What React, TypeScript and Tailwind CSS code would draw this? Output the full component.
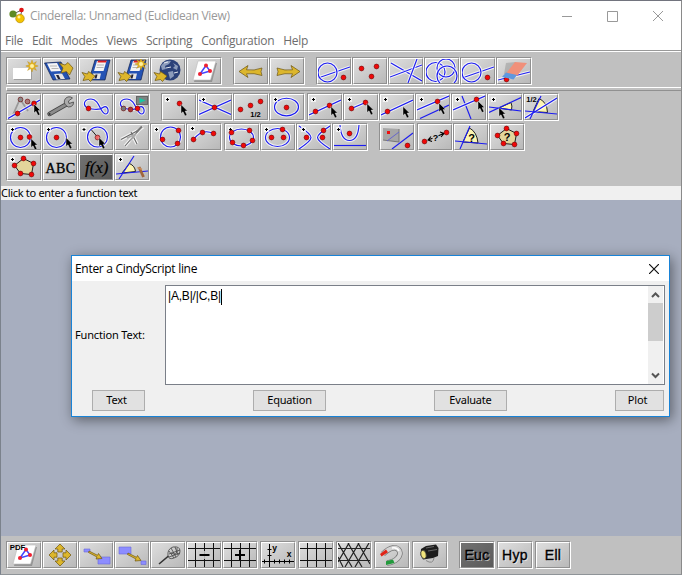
import React from "react";

type Pt = [number, number];

const Line = ({ d, glow = true }: { d: string; glow?: boolean }) => (
  <>
    {glow && <path d={d} fill="none" stroke="#fff" strokeOpacity={0.75} strokeWidth={3.2} />}
    <path d={d} fill="none" stroke="#1c1cf0" strokeWidth={1.15} />
  </>
);

const Dot = ({ at, fill = "#f00808", r = 2.4 }: { at: Pt; fill?: string; r?: number }) => (
  <circle cx={at[0]} cy={at[1]} r={r} fill={fill} stroke="#6b0000" strokeWidth={0.6} />
);

const Dots = ({ pts }: { pts: Pt[] }) => (
  <>
    {pts.map((p, i) => (
      <Dot key={i} at={p} />
    ))}
  </>
);

const Plus = ({ x = 4.5, y = 4.5 }: { x?: number; y?: number }) => (
  <g>
    <rect x={x - 2.5} y={y - 2.5} width={5} height={5} fill="#fff" fillOpacity={0.7} />
    <path d={`M${x - 1.5} ${y}h3M${x} ${y - 1.5}v3`} stroke="#000" strokeWidth={1} />
  </g>
);

const Cursor = ({ x, y }: { x: number; y: number }) => (
  <path
    transform={`translate(${x} ${y})`}
    d="M0 0V9L2 7.3L4 11.5L6 10.6L4.1 6.6H6.6Z"
    fill="#000"
    stroke="#fff"
    strokeWidth={0.4}
  />
);

const Txt = ({ x, y, s, children }: { x: number; y: number; s: number; children: string }) => (
  <text x={x} y={y} fontSize={s} fontWeight={700} textAnchor="middle" fontFamily="'Liberation Sans', sans-serif">
    {children}
  </text>
);

const Wedge = ({ d }: { d: string }) => <path d={d} fill="#fdf5b0" stroke="#222" strokeWidth={1} />;

const Gold = ({ d }: { d: string }) => <path d={d} fill="#dcb62c" stroke="#6d5410" strokeWidth={0.7} strokeLinejoin="round" />;

const PENTA: Pt[] = [
  [15.5, 3.5],
  [25.5, 8.5],
  [23.5, 19.5],
  [12.5, 18.5],
  [6.5, 10.5],
];
const Pentagon = () => (
  <>
    <path d="M15.5 3.5L25.5 8.5L23.5 19.5L12.5 18.5L6.5 10.5Z" fill="#e3d59b" stroke="#222" />
    <Dots pts={PENTA} />
  </>
);

const Floppy = () => (
  <g>
    <path d="M15 1H30L25 21H9Z" fill="#2453b4" stroke="#10204f" strokeWidth={0.7} />
    <path d="M17 2H26.5L23.5 12H14Z" fill="#f4f4f4" />
    <path d="M18 1.5H26.8L26 3.5H17.5Z" fill="#d22" />
    <path d="M17 6H24M16.5 8.5H23.5" stroke="#999" strokeWidth={0.7} />
    <path d="M13 14.5H21L19.7 20H11.5Z" fill="#e4e4e4" />
    <path d="M15.5 15.5H17.5L16.5 19.5H14.5Z" fill="#223" />
  </g>
);

const Star = ({ x, y }: { x: number; y: number }) => (
  <g transform={`translate(${x} ${y})`}>
    <path
      d="M0-6L1.3-2.5L4.4-4.4L2.7-1.2L6.2 0L2.7 1.2L4.4 4.4L1.3 2.6L0 6L-1.3 2.6L-4.4 4.4L-2.7 1.2L-6.2 0L-2.7-1.2L-4.4-4.4L-1.3-2.5Z"
      fill="#e4b524"
      stroke="#b98a14"
      strokeWidth={0.4}
    />
    <circle r={2} fill="#fff0a0" />
  </g>
);

const LOAD_ARROW = "M2 13.5L7.5 15L8.5 12.5L15 17L10.5 22.5L8.5 20.5L3 21.5L4.8 17.5Z";
const LOOP = "M8 13.5C2 10 4 4 11 4C20 4 20 19 26 19C30 18 28 9 23 12.5C19 16 14 14 8 13.5";

const Sheet = () => (
  <g>
    <path d="M11 4H29L24 23H6Z" fill="#777" opacity={0.6} />
    <path d="M10 2H28L22.5 21H5Z" fill="#fff" stroke="#bbb" strokeWidth={0.6} />
    <path d="M18 6.5L12 15L22 12Z" fill="none" stroke="#44f" strokeWidth={1.5} />
    <circle cx={18} cy={6.5} r={2} fill="#f02030" />
    <circle cx={12} cy={15} r={2} fill="#f02030" />
    <circle cx={22} cy={12} r={2} fill="#f02030" />
  </g>
);

const gridLines = "M0 5.5H32M0 17.5H32M7.5 0V24M16.5 0V24M25.5 0V24";

const icons: Record<string, React.ReactNode> = {
  fresh: (
    <>
      <path d="M6 10H24V21H6Z" fill="#777" opacity={0.5} />
      <path d="M5 9H23V20H5Z" fill="#fff" />
      <Star x={24} y={7} />
    </>
  ),
  open: (
    <>
      <path d="M0.5 4L17 3L26 20L9 21Z" fill="#2453b4" stroke="#10204f" strokeWidth={0.7} />
      <path d="M3 4.5L13 4L17 12L7 12.5Z" fill="#f4f4f4" />
      <path d="M6 7H13M7.5 9.5H14.5" stroke="#999" strokeWidth={0.7} />
      <path d="M10 15L18 14.5L21 20L12.5 20.5Z" fill="#e4e4e4" />
      <path d="M12 16H14.5L16.5 20H14Z" fill="#223" />
      <Gold d="M15 4L21 6L24 3.5L29 9L25.5 16L22.5 12.5L17 14L19 9Z" />
    </>
  ),
  save: (
    <>
      <Floppy />
      <Gold d={LOAD_ARROW} />
    </>
  ),
  saveAs: (
    <>
      <Floppy />
      <Gold d={LOAD_ARROW} />
      <Star x={25} y={5} />
    </>
  ),
  web: (
    <>
      <circle cx={18} cy={11} r={10.5} fill="#2b4179" />
      <path d="M9 7Q13 1 19 2L17 5L13 7L14 10L10 11ZM21 4L26 7L25 11L21 9L23 7ZM16 13L21 12L22 17L18 20L17 16Z" fill="#8b9bbb" />
      <path d="M12 4L16 3M22 14L26 13M14 9L19 8" stroke="#e4e8f0" />
      <Gold d={LOAD_ARROW} />
    </>
  ),
  sheet: <Sheet />,
  undo: <Gold d="M4 12.5L13 6.5L11.5 10.8Q19 12 27 9Q25 12.5 27 16.5Q19 13.8 11.5 14.8L13 18.5Z" />,
  redo: <Gold d="M29 12.5L20 6.5L21.5 10.8Q14 12 6 9Q8 12.5 6 16.5Q14 13.8 21.5 14.8L20 18.5Z" />,
  lineCircle: (
    <>
      <Line d="M0 19L32 8" />
      <Line d="M19 13.5A9.5 9.5 0 1 1 0 13.5A9.5 9.5 0 1 1 19 13.5" />
      <Dot at={[25.5, 18.5]} />
    </>
  ),
  dots3: <Dots pts={[[7.5, 9.5], [22.5, 7.5], [17.5, 17.5]]} />,
  lines3: (
    <>
      <Line d="M1 4L32 22" />
      <Line d="M0 18L32 6" />
      <Line d="M18 24L27 0" />
    </>
  ),
  circles3: (
    <>
      <Line d="M19 13A9.5 9.5 0 1 1 0 13A9.5 9.5 0 1 1 19 13" />
      <Line d="M29 9A9 9 0 1 1 11 9A9 9 0 1 1 29 9" />
      <Line d="M31 17A9.5 9.5 0 1 1 11 17A9.5 9.5 0 1 1 31 17" />
    </>
  ),
  eraser: (
    <>
      <Line d="M0 21L32 13" />
      <Dot at={[8.5, 20.5]} />
      <path d="M8 4L18 3L9 15H6Z" fill="#777" opacity={0.35} />
      <path d="M17 3L29 4L19 17L8 14.5Z" fill="#f0907a" />
      <path d="M8 13.5L19 16L15.5 20.5L4 18Z" fill="#5f98df" />
    </>
  ),
  move: (
    <>
      <path d="M4 22L12 4L20 16M18 7L26 11" fill="none" stroke="#999" strokeWidth={1.8} />
      <Dot at={[12.5, 4.5]} fill="#888" />
      <Dot at={[19.5, 6.5]} fill="#a77" />
      <Line d="M0 23.5L32 5" />
      <Dots pts={[[9.5, 18.5], [26, 8.5]]} />
      <Cursor x={26} y={9} />
    </>
  ),
  wrench: (
    <>
      <path d="M5.5 19L23 9" stroke="#444" strokeWidth={4.4} strokeLinecap="round" />
      <path d="M5.5 19L23 9" stroke="#8c8c8c" strokeWidth={2.8} strokeLinecap="round" />
      <path d="M28.5 3L24.5 6L25 8.5L29.5 7A4.3 4.3 0 0 1 22 10.5A4.4 4.4 0 0 1 28.5 3Z" fill="#aaa" stroke="#444" strokeWidth={0.8} />
      <circle cx={5.5} cy={19} r={1.1} fill="#333" />
    </>
  ),
  locus: (
    <>
      <Line d={LOOP} />
      <Dot at={[8.5, 13.5]} />
    </>
  ),
  anim: (
    <>
      <Line d={LOOP} />
      <Dot at={[7.5, 13.5]} fill="#777" />
      <Dot at={[14.5, 14.5]} fill="#a33" />
      <Dot at={[21.5, 13.5]} />
      <rect x={20.5} y={1.5} width={11} height={8} fill="#7c8583" stroke="#666" />
      <path d="M23.5 3L29.5 5.5L23.5 8Z" fill="#14c9a4" />
    </>
  ),
  point: (
    <>
      <Plus />
      <Dot at={[16.5, 8.5]} />
      <Cursor x={18} y={9.5} />
    </>
  ),
  meet: (
    <>
      <Line d="M0 5L32 19.5" />
      <Line d="M0 19.5L32 5" />
      <Plus />
      <Dot at={[15.5, 12.5]} />
    </>
  ),
  mid: (
    <>
      <Dots pts={[[5.5, 14.5], [15.5, 10.5], [25.5, 6.5]]} />
      <Txt x={20.5} y={21.5} s={7.5}>1/2</Txt>
    </>
  ),
  center: (
    <>
      <Line d="M27.5 12A12 8.8 0 1 1 3.5 12A12 8.8 0 1 1 27.5 12" />
      <Plus />
      <Dot at={[15.5, 12.5]} />
    </>
  ),
  line: (
    <>
      <Line d="M0 20L32 5" />
      <Plus />
      <Dots pts={[[6.5, 16.5], [20.5, 10.5]]} />
      <Cursor x={22} y={11.5} />
    </>
  ),
  segment: (
    <>
      <Line d="M6.5 13.5L20.5 7.5" />
      <Plus />
      <Dots pts={[[6.5, 13.5], [20.5, 7.5]]} />
      <Cursor x={22} y={8.5} />
    </>
  ),
  ray: (
    <>
      <Line d="M0 20L32 5" />
      <Plus />
      <Dot at={[6.5, 16.5]} />
      <Cursor x={22} y={11.5} />
    </>
  ),
  parallel: (
    <>
      <Line d="M0 15L32 1" />
      <Line d="M3 23.5L32 10" glow={false} />
      <Plus />
      <Dot at={[20.5, 6.5]} />
      <Cursor x={22} y={8} />
    </>
  ),
  perp: (
    <>
      <Line d="M9 1L18 24" glow={false} />
      <Line d="M0 15L32 1" />
      <Plus />
      <Dot at={[23.5, 4.5]} />
      <Cursor x={25} y={6} />
    </>
  ),
  angle: (
    <>
      <Wedge d="M10 13L22 7.5Q23.5 11 22.5 15Z" />
      <Line d="M0 12L32 16" glow={false} />
      <Line d="M0 17.5L32 2.5" glow={false} />
      <Plus />
      <Cursor x={10} y={12.5} />
    </>
  ),
  bisect: (
    <>
      <Wedge d="M8 16.5L14 3.5Q22 7 22.5 17.5Z" />
      <Line d="M0 23L32 3" />
      <Line d="M0 16L32 19M5 24L16 1" glow={false} />
      <Txt x={6.5} y={7} s={7.5}>1/2</Txt>
    </>
  ),
  circle2: (
    <>
      <Line d="M22.5 12.5A10 10 0 1 1 2.5 12.5A10 10 0 1 1 22.5 12.5" />
      <Plus />
      <Dots pts={[[12.5, 12.5], [21.5, 12]]} />
      <Cursor x={23} y={13.5} />
    </>
  ),
  circle1: (
    <>
      <Line d="M22.5 12.5A10 10 0 1 1 2.5 12.5A10 10 0 1 1 22.5 12.5" />
      <Plus />
      <Dot at={[12.5, 12.5]} />
      <Cursor x={22} y={12.5} />
    </>
  ),
  circleR: (
    <>
      <Line d="M27.5 12A10 10 0 1 1 7.5 12A10 10 0 1 1 27.5 12" />
      <path d="M11.5 5L17.5 12" stroke="#222" />
      <Plus x={4} />
      <Dot at={[17.5, 12.5]} fill="#e66" />
      <Cursor x={19} y={12.5} />
    </>
  ),
  compass: (
    <>
      <path d="M5 14.5L23 5M9 21L23 5L27 2M15 7L21 19" fill="none" stroke="#f4f4f4" strokeWidth={3.4} />
      <path d="M5 14.5L23 5M9 21L23 5M15 7L21 19" fill="none" stroke="#666" strokeWidth={1.1} />
      <path d="M20 7.5L26 1.5" stroke="#777" strokeWidth={2.2} />
      <path d="M11 13L20 9M14 16L20 9" stroke="#aaa" strokeWidth={1.4} />
    </>
  ),
  circle3: (
    <>
      <Line d="M28.5 12A10 10 0 1 1 8.5 12A10 10 0 1 1 28.5 12" />
      <Plus />
      <Dots pts={[[10.5, 14.5], [26.5, 5.5], [25.5, 18.5]]} />
    </>
  ),
  arc: (
    <>
      <Line d="M5.5 14.5Q14 3 25.5 8.5" />
      <Plus y={3.5} />
      <Dots pts={[[5.5, 14.5], [14.5, 7.5], [25.5, 8.5]]} />
    </>
  ),
  conic5: (
    <>
      <Line d="M27.5 12.5A12 8.5 0 1 1 3.5 12.5A12 8.5 0 1 1 27.5 12.5" />
      <Plus />
      <Dots pts={[[5.5, 7.5], [23.5, 5.5], [26.5, 15.5], [17.5, 20.5], [6.5, 17.5]]} />
    </>
  ),
  ellipse: (
    <>
      <Line d="M27.5 12.5A12 9 0 1 1 3.5 12.5A12 9 0 1 1 27.5 12.5" />
      <Plus />
      <Dots pts={[[9.5, 12.5], [21.5, 12.5], [20.5, 4.5]]} />
    </>
  ),
  hyperbola: (
    <>
      <Line d="M1 1Q13 9 13 12.5Q13 16 1 24" />
      <Line d="M32 1Q19.5 9 19.5 12.5Q19.5 16 32 24" />
      <Plus x={5.5} />
      <Dots pts={[[8.5, 12.5], [24.5, 12.5], [25.5, 5.5]]} />
    </>
  ),
  parabola: (
    <>
      <Line d="M6 0Q7 15.5 15.5 15.5Q24 15.5 25 0" />
      <Line d="M0 20.5H32" glow={false} />
      <Plus />
      <Dot at={[15.5, 8.5]} />
    </>
  ),
  mirror: (
    <>
      <path d="M2 3L18 4V17L2 15Z" fill="#a6a6a6" />
      <path d="M2 15L18 17V4" fill="none" stroke="#777" />
      <path d="M6 16L18 7" stroke="#66c" />
      <Line d="M11 24L32 8" glow={false} />
      <rect x={6} y={6} width={3} height={3} fill="#e11" />
      <Dot at={[26.5, 20.5]} />
    </>
  ),
  distance: (
    <>
      <path d="M9 15L13.5 13.3M19.5 10.7L25 8.3M12 11.5L9 15L13 16.5M21 7L25 8.5L22 12" fill="none" stroke="#000" strokeWidth={1.1} />
      <Txt x={16.5} y={15.5} s={9}>?</Txt>
      <Dots pts={[[5.5, 16.5], [27.5, 7.5]]} />
    </>
  ),
  angleQ: (
    <>
      <Wedge d="M8 17L14.5 3Q22 7 23 18Z" />
      <Line d="M0 16L32 19M5 24L15 1" glow={false} />
      <Txt x={16.5} y={16.5} s={11}>?</Txt>
    </>
  ),
  areaQ: (
    <>
      <Pentagon />
      <Txt x={16} y={16} s={11}>?</Txt>
    </>
  ),
  polygon: (
    <>
      <Pentagon />
      <Plus />
    </>
  ),
  abc: (
    <text x={1.5} y={17.5} fontSize={14} stroke="#000" strokeWidth={0.35} textLength={29.5} fontFamily="'Liberation Serif', serif">
      ABC
    </text>
  ),
  fx: (
    <text x={5} y={17.5} fontSize={17} fontStyle="italic" textLength={23.5} stroke="#000" strokeWidth={0.2} fontFamily="'Liberation Serif', serif">
      f(x)
    </text>
  ),
  angleMark: (
    <>
      <Wedge d="M6 18L13.5 8.5Q19 11 19.5 16.5Z" />
      <Line d="M0 19L32 16M3 24L18 1" glow={false} />
      <path d="M23 12L27.5 22" stroke="#a0653c" strokeWidth={2.8} />
      <path d="M21.5 12.5L26 14.5" stroke="#c98e5c" strokeWidth={1.5} />
      <Plus />
    </>
  ),
  pdf: (
    <>
      <Sheet />
      <Txt x={9.5} y={7.3} s={7.8}>PDF</Txt>
    </>
  ),
  pan: (
    <Gold d="M16 1L21 6H18.2V9H13.8V6H11ZM16 23L11 18H13.8V15H18.2V18H21ZM5 12L10 7V9.8H13V14.2H10V17ZM27 12L22 7V9.8H19V14.2H22V17Z" />
  ),
  zoomIn: (
    <>
      <path d="M4 6H10V9H4ZM18 14H30V21H18Z" fill="#8d8dff" stroke="#6a6ad8" strokeWidth={0.6} />
      <Gold d="M9 8L17.5 12.3L18.5 10.5L22 15.5L16 16L17 14L8.5 9.5Z" />
    </>
  ),
  zoomOut: (
    <>
      <path d="M3 4H15V11H3ZM25 18H30V21.5H25Z" fill="#8d8dff" stroke="#6a6ad8" strokeWidth={0.6} />
      <Gold d="M12 10L20.5 14.3L21.5 12.5L25 17.5L19 18L20 16L11.5 11.5Z" />
    </>
  ),
  net: (
    <>
      <path d="M7 21L16.5 13" stroke="#333" strokeWidth={1.6} />
      <path
        d="M16 13Q15 6 21 4Q28 3 28 8Q28 13 22 15Q17 17 16 13ZM17 11L28 7M17 14L28 10M19 5L24 14M23 4L26 12M17 8L22 15M19 10Q26 14 25 5"
        fill="none"
        stroke="#444"
        strokeWidth={0.8}
      />
    </>
  ),
  gridMinus: (
    <>
      <path d={gridLines} stroke="#111" strokeWidth={1} />
      <rect x={10} y={8} width={14} height={8} fill="#ccc" fillOpacity={0.85} />
      <path d="M11.5 12H21.5" stroke="#000" strokeWidth={2} />
    </>
  ),
  gridPlus: (
    <>
      <path d={gridLines} stroke="#111" strokeWidth={1} />
      <rect x={10} y={7} width={14} height={10} fill="#ccc" fillOpacity={0.85} />
      <path d="M11 12H21M16 7V17" stroke="#000" strokeWidth={2} />
    </>
  ),
  axes: (
    <>
      <path
        d="M0 18.5H32M7.5 1V24M5.5 6.5H9.5M5.5 12.5H9.5M12.5 16.5V20.5M17.5 16.5V20.5M22.5 16.5V20.5M27.5 16.5V20.5M2.5 16.5V20.5"
        stroke="#000"
      />
      <Txt x={12.7} y={7.7} s={8.5}>y</Txt>
      <Txt x={27} y={14} s={8.5}>x</Txt>
    </>
  ),
  grid: <path d={gridLines} stroke="#111" />,
  tri: (
    <path
      d="M0 5.5H32M0 17.5H32M0 0L14 24M10 0L24 24M20 0L32 21M31 0L17 24M21 0L7 24M11 0L0 19M0 14L5 24"
      fill="none"
      stroke="#222"
      strokeWidth={1.2}
    />
  ),
  magnet: (
    <>
      <path d="M7 11C14 4 21 3 23.5 8C25.5 13 20 19 11 20" fill="none" stroke="#777" strokeWidth={5.4} />
      <path d="M7 11C14 4 21 3 23.5 8C25.5 13 20 19 11 20" fill="none" stroke="#d4d4d4" strokeWidth={4} />
      <path d="M16 5Q21 4 23 8" fill="none" stroke="#fff" strokeWidth={1.5} />
      <path d="M4 11L10 6.5L12 9.2L5.5 13.5Z" fill="#e02418" />
      <path d="M10 18.2L17 16.4L18.5 20L10 22Z" fill="#229a3c" />
    </>
  ),
  lamp: (
    <>
      <path d="M7 6L12 3L22 1.5L24.5 5L24 13L19 15L9 16.5L6.5 12Z" fill="#1d1d1d" />
      <path d="M12 5L20 3.5M14 8L23 6.5" stroke="#666" />
      <ellipse cx={9.5} cy={11.5} rx={2.6} ry={4.2} fill="#f2e57c" stroke="#333" strokeWidth={0.7} transform="rotate(-15 9.5 11.5)" />
      <path d="M12 17.5Q19 22 20 15" fill="none" stroke="#888" />
    </>
  ),
  euc: <Geo>Euc</Geo>,
  hyp: <Geo>Hyp</Geo>,
  ell: <Geo>Ell</Geo>,
};

function Geo({ children }: { children: string }) {
  return (
    <g fontFamily="'Liberation Sans', sans-serif" fontSize={14} textAnchor="middle" strokeWidth={0.35} letterSpacing={0.3}>
      <text x={17} y={18} fill="#fff" opacity={0.6}>{children}</text>
      <text x={16} y={17} stroke="#000">{children}</text>
    </g>
  );
}

function Tool({ name }: { name: string }) {
  const active = name === "fx" || name === "euc";
  return (
    <div className="h-[28px] w-[36px] shrink-0 border border-t-[#909090] border-l-[#909090] border-r-white border-b-white">
      <div
        className={
          "h-full w-full border border-t-white border-l-white border-r-[#909090] border-b-[#909090] " +
          (active ? "bg-linear-to-br from-[#727272] to-[#5a5a5a]" : "bg-linear-to-br from-[#dedede] to-[#b9b9b9]")
        }
      >
        <svg className="block" width={32} height={24} viewBox="0 0 32 24">
          {icons[name]}
        </svg>
      </div>
    </div>
  );
}

function Group({ names, className = "" }: { names: string; className?: string }) {
  return (
    <div className={"flex " + className}>
      {names.split(" ").map((n, i) => (
        <Tool key={i} name={n} />
      ))}
    </div>
  );
}

function Push({ label, className }: { label: string; className: string }) {
  return (
    <button className={"h-[21px] border border-[#adadad] bg-[#e1e1e1] pb-px text-[11px] leading-[18px] tracking-[-0.2px] " + className}>
      {label}
    </button>
  );
}

function Dialog() {
  return (
    <div className="absolute top-[254px] left-[70px] flex h-[162px] w-[599px] flex-col border border-[#1883d7] bg-[#f0f0f0] shadow-[2px_3px_12px_rgba(0,0,0,0.45)]">
      <div className="flex h-[25px] shrink-0 items-center justify-between bg-white pr-[10px] pl-[3px]">
        <span className="font-['Open_Sans',sans-serif] text-[12px] tracking-[-0.3px]">Enter a CindyScript line</span>
        <svg width={10} height={10} viewBox="0 0 10 10">
          <path d="M0 0L10 10M10 0L0 10" stroke="#111" strokeWidth={1.2} />
        </svg>
      </div>
      <div className="flex pt-[4px] pr-[4px]">
        <div className="flex h-[100px] w-[93px] items-center pl-[3px] text-[11px] tracking-[-0.15px]">Function Text:</div>
        <div className="flex h-[100px] flex-1 border border-[#7a7f88] bg-white pr-px">
          <div className="flex flex-1 items-start pt-[3px] pl-[2px] font-['Liberation_Sans',sans-serif] text-[12px] leading-[15px] tracking-[-0.2px]">
            <span>|A,B|/|C,B|</span>
            <span className="h-[16px] w-px bg-black" />
          </div>
          <div className="flex w-[15px] flex-col items-center bg-[#f0f0f0]">
            <svg className="h-[17px] w-[15px]" viewBox="0 0 15 17">
              <path d="M4 11L7.5 7.5L11 11" fill="none" stroke="#555" strokeWidth={2} />
            </svg>
            <div className="h-[38px] w-full bg-[#cdcdcd]" />
            <div className="flex-1" />
            <svg className="h-[17px] w-[15px]" viewBox="0 0 15 17">
              <path d="M4 6.5L7.5 10L11 6.5" fill="none" stroke="#555" strokeWidth={2} />
            </svg>
          </div>
        </div>
      </div>
      <div className="flex justify-between pt-[5px] pr-[5px] pl-[20px]">
        <Push label="Text" className="w-[53px] pr-[4px]" />
        <Push label="Equation" className="w-[73px]" />
        <Push label="Evaluate" className="w-[73px]" />
        <Push label="Plot" className="w-[49px] pr-[4px]" />
      </div>
    </div>
  );
}

export default function App() {
  return (
    <div className="relative flex h-[575px] w-[682px] flex-col overflow-hidden border border-t-[#72747e] border-r-[#8a8a8a] border-b-[#8f9498] border-l-[#7b828c] bg-[#c0c0c0] font-['Noto_Sans',sans-serif] text-black">
      <div className="flex h-[30px] shrink-0 items-center bg-white pl-[8px]">
        <svg width={18} height={18} viewBox="0 0 18 18">
          <path d="M4 7L13 3L11 11Z" fill="none" stroke="#666" />
          <circle cx={4} cy={7} r={3.6} fill="#5e8a24" />
          <circle cx={12.5} cy={3} r={2.3} fill="#e01414" />
          <circle cx={11} cy={11.5} r={4.3} fill="#f5c400" stroke="#a87f00" strokeWidth={0.6} />
          <circle cx={10} cy={10} r={1.5} fill="#fff09a" />
        </svg>
        <span className="ml-[3px] font-['Open_Sans',sans-serif] text-[12px] tracking-[-0.33px] text-[#999]">
          Cinderella: Unnamed (Euclidean View)
        </span>
        <svg className="mr-[18px] ml-auto" width={102} height={12} viewBox="0 0 102 12" fill="none" stroke="#999">
          <path d="M1 6.5H11M92 1L102 11M102 1L92 11" />
          <path d="M46.5 1.5H56.5V11.5H46.5Z" />
        </svg>
      </div>
      <div className="flex h-[20px] shrink-0 gap-[9px] border-b border-[#999] bg-white pl-[4px] font-['Open_Sans',sans-serif] text-[12px] leading-[20px] tracking-[-0.28px] text-[#6d6d6d]">
        <span>File</span>
        <span>Edit</span>
        <span>Modes</span>
        <span>Views</span>
        <span>Scripting</span>
        <span>Configuration</span>
        <span>Help</span>
      </div>
      <div className="h-[135px] shrink-0 border-t border-white pl-[5px]">
        <div className="flex pt-[5px]">
          <Group names="fresh open save saveAs web sheet" />
          <Group names="undo redo" className="ml-[11px]" />
          <Group names="lineCircle dots3 lines3 circles3 lineCircle eraser" className="ml-[11px]" />
        </div>
        <div className="mt-[2px] mb-[2px] h-[4px] border border-t-white border-r-0 border-b-[#909090] border-l-white" />
        <div className="flex h-[30px]">
          <Group names="move wrench locus anim" />
          <Group names="point meet mid center" className="ml-[11px]" />
          <Group names="line segment ray parallel perp angle bisect" className="ml-[2px]" />
        </div>
        <div className="flex h-[30px]">
          <Group names="circle2 circle1 circleR compass circle3 arc" />
          <Group names="conic5 ellipse hyperbola parabola" className="ml-[2px]" />
          <Group names="mirror" className="ml-[11px]" />
          <Group names="distance angleQ areaQ" className="ml-[2px]" />
        </div>
        <Group names="polygon abc fx angleMark" />
      </div>
      <div className="h-[14px] shrink-0 bg-[#f0f0f0] text-[11px] leading-[14px] tracking-[-0.3px]">Click to enter a function text</div>
      <div className="flex-1 bg-[#a7aebf]" />
      <div className="flex h-[38px] shrink-0 pt-[5px] pl-[5px]">
        <Group names="pdf pan zoomIn zoomOut net gridMinus gridPlus" />
        <Group names="axes" className="ml-[2px]" />
        <Group names="grid" className="ml-[2px]" />
        <Group names="tri" className="ml-[2px]" />
        <Group names="magnet" className="ml-[2px]" />
        <Group names="lamp" className="ml-[2px]" />
        <Group names="euc" className="ml-[11px]" />
        <Group names="hyp" className="ml-[2px]" />
        <Group names="ell" className="ml-[2px]" />
      </div>
      <Dialog />
    </div>
  );
}
